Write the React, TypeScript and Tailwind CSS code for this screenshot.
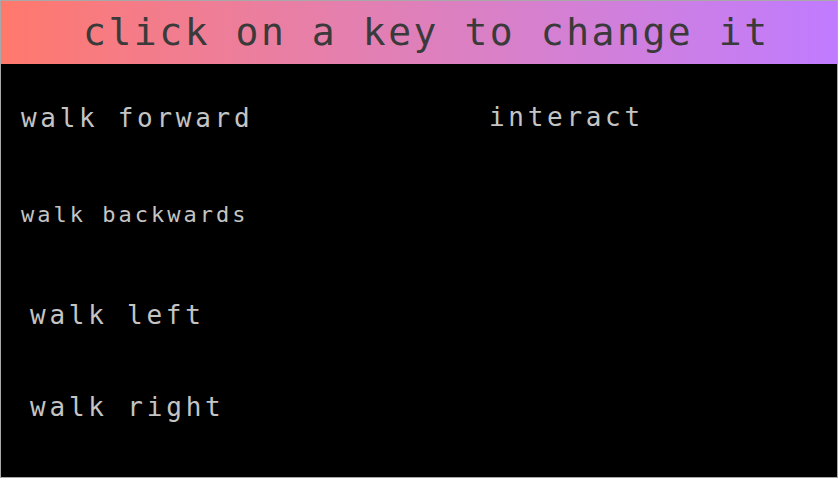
import React from "react";

const mono = { fontFamily: '"DejaVu Sans Mono", monospace' };

export default function App() {
  return (
    <div className="w-[839px] h-[479px] bg-white">
      <div className="w-[838px] h-[478px] border border-[#a8a8a8] bg-black flex flex-col" style={mono}>
        <div className="h-[63px] shrink-0 flex items-center bg-gradient-to-r from-[#ff786b] to-[#c07bff] pl-[82px] pb-[2px]">
          <span className="text-[38px] tracking-[2.55px] text-[#3a3a3a] leading-none">click on a key to change it</span>
        </div>
        <div className="flex flex-1 text-[#c4c4c4]">
          <div className="w-[488px] flex flex-col items-start pl-[20px]">
            <div className="mt-[41px] text-[26px] leading-none tracking-[3.7px]">walk forward</div>
            <div className="mt-[73px] text-[22px] leading-none tracking-[3px]">walk backwards</div>
            <div className="mt-[76px] ml-[9px] text-[26px] leading-none tracking-[3.75px]">walk left</div>
            <div className="mt-[66px] ml-[9px] text-[26px] leading-none tracking-[3.8px]">walk right</div>
          </div>
          <div className="flex flex-col items-start">
            <div className="mt-[40px] text-[26px] leading-none tracking-[3.7px]">interact</div>
          </div>
        </div>
      </div>
    </div>
  );
}
